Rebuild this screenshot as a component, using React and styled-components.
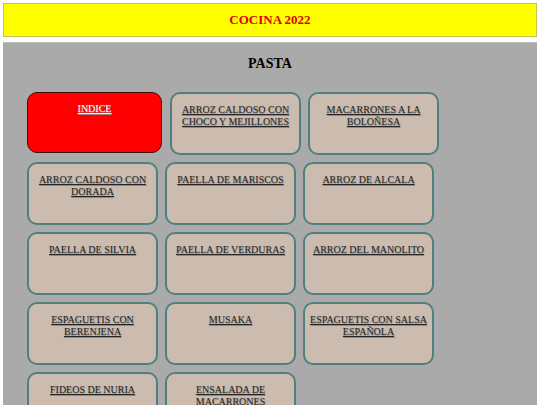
import React from 'react';
import styled, { createGlobalStyle } from 'styled-components';

const serif = '"Liberation Serif", "Times New Roman", Times, serif';

const GlobalStyle = createGlobalStyle`
  body {
    margin: 3px;
    background: #ffffff;
    font-family: ${serif};
  }
`;

const Header = styled.header`
  height: 32px;
  border: 1px solid #c4c454;
  background: #ffff00;
  display: flex;
  align-items: center;
  justify-content: center;
  color: #e00000;
  font-family: ${serif};
  font-size: 13px;
  font-weight: bold;
`;

const Panel = styled.main`
  margin-top: 5px;
  min-height: 400px;
  background: #aaaaaa;
  border-top: 1px solid #bdbdbd;
  padding: 13px 0 0 24px;
`;

const Title = styled.h1`
  margin: 0 0 20px -24px;
  text-align: center;
  font-family: ${serif};
  font-size: 14px;
  line-height: 16px;
  font-weight: bold;
  color: #000;
`;

const Grid = styled.div`
  width: 420px;
  display: flex;
  flex-wrap: wrap;
  align-items: flex-start;
  gap: 7px 7px;
`;

const Card = styled.a`
  box-sizing: border-box;
  width: ${(p) => (p.$main ? '135px' : '131px')};
  height: ${(p) => (p.$main ? '61px' : '63px')};
  margin-right: ${(p) => (p.$main ? '1px' : '0')};
  padding: 10px 3px 0;
  border: ${(p) => (p.$main ? '1.5px solid #3a1010' : '2px solid #4f8080')};
  border-radius: 10px;
  background: ${(p) => (p.$main ? '#ff0000' : '#ccbcaf')};
  color: ${(p) => (p.$main ? '#ffffff' : '#262626')};
  text-align: center;
  font-family: ${serif};
  font-size: 10px;
  font-weight: normal;
  line-height: 12px;
  text-decoration: underline;
  text-shadow: 0.5px 1px 1px #8a8a8a;
  cursor: pointer;
`;

const dishes = [
  'ARROZ CALDOSO CON CHOCO Y MEJILLONES',
  'MACARRONES A LA BOLOÑESA',
  'ARROZ CALDOSO CON DORADA',
  'PAELLA DE MARISCOS',
  'ARROZ DE ALCALA',
  'PAELLA DE SILVIA',
  'PAELLA DE VERDURAS',
  'ARROZ DEL MANOLITO',
  'ESPAGUETIS CON BERENJENA',
  'MUSAKA',
  'ESPAGUETIS CON SALSA ESPAÑOLA',
  'FIDEOS DE NURIA',
  'ENSALADA DE MACARRONES',
];

export default function App() {
  return (
    <>
      <GlobalStyle />
      <Header>COCINA 2022</Header>
      <Panel>
        <Title>PASTA</Title>
        <Grid>
          <Card $main>INDICE</Card>
          {dishes.map((d) => (
            <Card key={d}>{d}</Card>
          ))}
        </Grid>
      </Panel>
    </>
  );
}
